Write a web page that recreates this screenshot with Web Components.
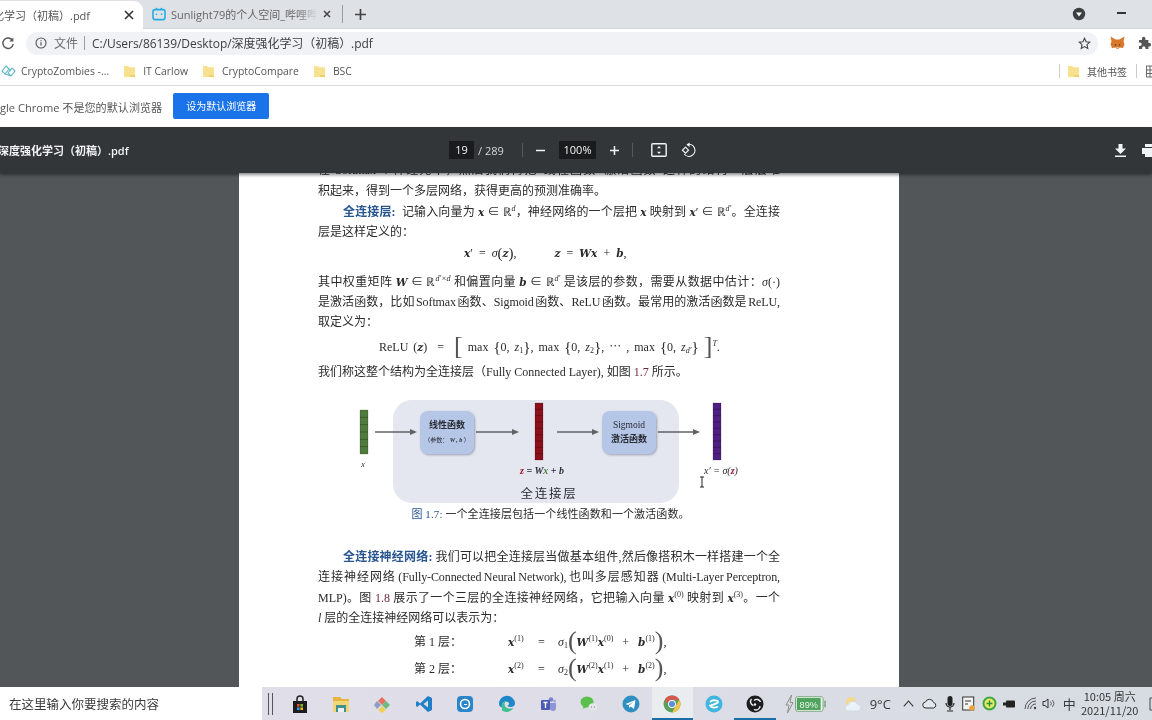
<!DOCTYPE html>
<html lang="zh">
<head>
<meta charset="utf-8">
<title>深度强化学习（初稿）.pdf</title>
<style>
  html, body { margin: 0; width: 1152px; height: 720px; overflow: hidden; background: #525659; }
  body { display: flex; flex-direction: column; font-family: "Open Sans", "Noto Sans CJK SC", sans-serif; filter: blur(.35px); }
</style>
</head>
<body>
<tab-strip></tab-strip>
<address-bar></address-bar>
<bookmark-bar></bookmark-bar>
<default-infobar></default-infobar>
<pdf-toolbar></pdf-toolbar>
<pdf-viewer></pdf-viewer>
<win-taskbar></win-taskbar>

<script>
const UI_FONT = '"Open Sans", "Noto Sans CJK SC", sans-serif'
const FOLDER = `<svg width="13" height="14" viewBox="0 0 13 14"><path d="M1 2h4l1 1.2h6V13H1z" fill="#f7e08e"/><path d="M7 11h5v2H7z" fill="#f0cf6d"/></svg>`

class TabStrip extends HTMLElement {
	constructor() {
		super()
		this.attachShadow({ mode: 'open' })
	}

	connectedCallback() {
		this.shadowRoot.innerHTML = /* html */ `
      <style>
        :host { display: flex; align-items: flex-end; height: 29px; background: #dee1e6; box-sizing: border-box; border-bottom: 1px solid #d2d4d8; font: 11px ${UI_FONT}; color: #555; }
        .active { display: flex; align-items: center; width: 143px; height: 28px; background: #fff; border-radius: 0 9px 0 0; overflow: hidden; box-sizing: border-box; padding-bottom: 1px; margin-bottom: -1px; flex: none; }
        .active span { margin-left: -18px; width: 141px; flex: none; white-space: nowrap; }
        .x { flex: none; width: 12px; height: 12px; }
        .tab { display: flex; align-items: center; height: 28px; width: 199px; box-sizing: border-box; padding-left: 9px; position: relative; }
        .tab .name { margin-left: 5px; width: 147px; white-space: nowrap; overflow: hidden; color: #666;
          -webkit-mask-image: linear-gradient(90deg, #000 85%, transparent); mask-image: linear-gradient(90deg, #000 85%, transparent); }
        .tab .x { margin-left: 3px; }
        .sep { width: 1px; height: 18px; background: #9a9da1; margin: 0 0 5px 0; }
        .plus { margin: 0 0 7px 11px; width: 13px; height: 13px; }
        .grow { flex: 1; }
        .badge { margin: 0 0 7px 0; width: 14px; height: 14px; }
        .min { margin: 0 26px 14px 31px; width: 9px; height: 2px; background: #333; }
      </style>
      <div class="active">
        <span>强化学习（初稿）.pdf</span>
        <svg class="x" viewBox="0 0 12 12"><path d="M2 2l8 8M10 2l-8 8" stroke="#333" stroke-width="1.6"/></svg>
      </div>
      <div class="tab">
        <svg width="14" height="14" viewBox="0 0 14 14"><path d="M4 .8l2 2M10 .8l-2 2" stroke="#23ade5" stroke-width="1.2"/><rect x="1" y="2.6" width="12" height="10" rx="2" fill="none" stroke="#23ade5" stroke-width="1.6"/><path d="M4.5 6.5v1.5M9.5 6.5v1.5" stroke="#23ade5" stroke-width="1.4"/></svg>
        <span class="name">Sunlight79的个人空间_哔哩哔哩</span>
        <svg class="x" viewBox="0 0 12 12"><path d="M3 3l6 6M9 3l-6 6" stroke="#444" stroke-width="1.5"/></svg>
      </div>
      <div class="sep"></div>
      <svg class="plus" viewBox="0 0 13 13"><path d="M6.5 1v11M1 6.5h11" stroke="#444" stroke-width="1.7"/></svg>
      <div class="grow"></div>
      <svg class="badge" viewBox="0 0 14 14"><circle cx="7" cy="7" r="6.2" fill="#3c4043"/><path d="M4 5.6h6L7 9.4z" fill="#fff"/></svg>
      <div class="min"></div>
    `
	}
}
customElements.define('tab-strip', TabStrip)

class AddressBar extends HTMLElement {
	constructor() {
		super()
		this.attachShadow({ mode: 'open' })
	}

	connectedCallback() {
		this.shadowRoot.innerHTML = /* html */ `
      <style>
        :host { display: flex; align-items: center; height: 28px; background: #fff; font: 12px ${UI_FONT}; color: #3c4043; }
        .reload { flex: none; width: 14px; height: 14px; margin: 0 11px 0 1px; }
        .pill { flex: none; width: 1072px; height: 23px; background: #f0f2f6; border-radius: 12px; display: flex; align-items: center; box-sizing: border-box; padding-left: 9px; }
        .info { flex: none; width: 12px; height: 12px; }
        .kind { margin-left: 7px; color: #6a6d71; }
        .bar { width: 1px; height: 14px; background: #9a9da1; margin: 0 7px 0 6px; }
        .url { flex: 1; white-space: nowrap; letter-spacing: -.05px; }
        .star { flex: none; margin-right: 7px; }
        .fox { flex: none; margin: 0 0 1px 12px; }
        .puzzle { flex: none; margin: 0 0 1px 13px; }
      </style>
      <svg class="reload" viewBox="0 0 14 14"><path d="M11.5 4.5A5.2 5.2 0 1 0 12.2 8" fill="none" stroke="#555" stroke-width="1.4"/><path d="M12.4 1.6v4h-4z" fill="#555"/></svg>
      <div class="pill">
        <svg class="info" viewBox="0 0 12 12"><circle cx="6" cy="6" r="5" fill="none" stroke="#555" stroke-width="1.1"/><path d="M6 5.2v3.4M6 3.2v1" stroke="#555" stroke-width="1.2"/></svg>
        <span class="kind">文件</span><span class="bar"></span>
        <span class="url">C:/Users/86139/Desktop/深度强化学习（初稿）.pdf</span>
        <svg class="star" width="13" height="13" viewBox="0 0 14 14"><path d="M7 1.4l1.7 3.7 4 .5-3 2.7.8 4L7 10.3l-3.5 2 .8-4-3-2.7 4-.5z" fill="none" stroke="#444" stroke-width="1.2"/></svg>
      </div>
      <svg class="fox" width="15" height="14" viewBox="0 0 15 14"><path d="M.5.5l5.2 3h3.6l5.2-3-1 5 1 3-1.6 3.6-3.2-.6-1.5 1.4H6.800l-1.500-1.400-3.200.6L.5 8.500l1-3z" fill="#d9772a"/><path d="M5 8l1.500 1-1.800.8zM10 8l-1.500 1 1.800.8z" fill="#33302c"/><path d="M6.500 11h2l-.3 1.500H6.800z" fill="#e9d7c4"/></svg>
      <svg class="puzzle" width="13" height="14" viewBox="0 0 13 14"><path d="M1 4h3V2.500a1.700 1.700 0 0 1 3.400 0V4h3v3h1a1.700 1.700 0 0 1 0 3.400h-1V13H7.500v-1a1.700 1.700 0 0 0-3.400 0v1H1v-3h1a1.700 1.700 0 0 0 0-3.400H1z" fill="#555"/></svg>
    `
	}
}
customElements.define('address-bar', AddressBar)

class BookmarkBar extends HTMLElement {
	constructor() {
		super()
		this.attachShadow({ mode: 'open' })
	}

	connectedCallback() {
		this.shadowRoot.innerHTML = /* html */ `
      <style>
        :host { display: flex; align-items: center; height: 29px; box-sizing: border-box; border-bottom: 1px solid #dadce0; background: #fff; font: 10.4px ${UI_FONT}; color: #555; white-space: nowrap; overflow: hidden; }
        .zombie { margin: 0 5px 0 1px; flex: none; }
        .mark { display: flex; align-items: center; gap: 7px; flex: none; }
        .grow { flex: 1; }
        .div { width: 1px; height: 14px; background: #ccc; flex: none; }
        .grid { margin: 0 -6px 0 9px; flex: none; }
        .other { font-size: 10px; }
      </style>
      <svg class="zombie" width="15" height="14" viewBox="0 0 15 14"><path d="M1 7l4-5 3 3-4 5zM7 9l4-5 3 3-4 5zM5 2l5 5M4 10l6 2" fill="none" stroke="#5cb6c2" stroke-width="1.100"/></svg>
      <span>CryptoZombies -...</span>
      <span class="mark" style="margin-left:14px">${FOLDER}<span>IT Carlow</span></span>
      <span class="mark" style="margin-left:14px">${FOLDER}<span>CryptoCompare</span></span>
      <span class="mark" style="margin-left:14px">${FOLDER}<span>BSC</span></span>
      <span class="grow"></span>
      <span class="div"></span>
      <span class="mark" style="margin:0 9px 0 7px">${FOLDER}<span class="other">其他书签</span></span>
      <span class="div"></span>
      <svg class="grid" width="12" height="13" viewBox="0 0 12 13"><path d="M.5 1h11v11H.5zM.5 5h11M.5 8.500h11M4 1v11" fill="none" stroke="#666"/></svg>
    `
	}
}
customElements.define('bookmark-bar', BookmarkBar)

class DefaultInfobar extends HTMLElement {
	constructor() {
		super()
		this.attachShadow({ mode: 'open' })
	}

	connectedCallback() {
		this.shadowRoot.innerHTML = /* html */ `
      <style>
        :host { display: flex; align-items: center; height: 41px; background: #fff; font: 11.100px ${UI_FONT}; color: #555; white-space: nowrap; }
        button { all: unset; margin: 0 0 1px 11px; width: 96px; height: 26px; line-height: 26px; text-align: center; background: #1a73e8; border-radius: 2px; color: #fff; font-size: 10px; }
      </style>
      <span>gle Chrome 不是您的默认浏览器</span>
      <button>设为默认浏览器</button>
    `
	}
}
customElements.define('default-infobar', DefaultInfobar)

class PdfToolbar extends HTMLElement {
	constructor() {
		super()
		this.attachShadow({ mode: 'open' })
	}

	connectedCallback() {
		this.shadowRoot.innerHTML = /* html */ `
      <style>
        :host { display: flex; align-items: center; height: 46px; flex: none; background: #323639; color: #f1f3f4; font: 11px ${UI_FONT}; position: relative; z-index: 2; box-shadow: 0 2px 3px rgba(0,0,0,.45); white-space: nowrap; }
        .title { width: 449px; flex: none; overflow: hidden; font-weight: 600; }
        .title span { display: block; margin-left: -2px; }
        .box { flex: none; height: 18px; line-height: 18px; text-align: center; background: #191b1c; }
        .page { width: 25px; }
        .of { margin-left: 4px; width: 44px; flex: none; color: #d5d7d8; }
        .div { flex: none; width: 1px; height: 14px; background: #55595c; }
        .zoom { width: 37px; }
        svg { flex: none; }
      </style>
      <div class="title"><span>深度强化学习（初稿）.pdf</span></div>
      <div class="box page">19</div>
      <div class="of">/ 289</div>
      <div class="div"></div>
      <svg style="margin:0 13px 0 12px" width="11" height="11" viewBox="0 0 11 11"><path d="M1 5.500h9" stroke="#f1f3f4" stroke-width="1.500"/></svg>
      <div class="box zoom">100%</div>
      <svg style="margin:0 12px 0 13px" width="11" height="11" viewBox="0 0 11 11"><path d="M1 5.500h9M5.500 1v9" stroke="#f1f3f4" stroke-width="1.500"/></svg>
      <div class="div"></div>
      <svg style="margin-left:18px" width="16" height="14" viewBox="0 0 16 14"><rect x=".8" y=".8" width="14.400" height="12.400" rx="1" fill="none" stroke="#f1f3f4" stroke-width="1.400"/><path d="M8 3l2 2.200H6zM8 11l2-2.200H6z" fill="#f1f3f4"/></svg>
      <svg style="margin-left:14px" width="16" height="16" viewBox="0 0 16 16"><path d="M6 2.600A6 6 0 1 1 3.200 12" fill="none" stroke="#f1f3f4" stroke-width="1.200"/><path d="M8.600.5v4.500L5.500 2.700z" fill="#f1f3f4"/><path d="M4.500 5.200L7.500 8.200 4.500 11.200 1.500 8.200z" fill="none" stroke="#f1f3f4" stroke-width="1.200"/></svg>
      <span style="flex:1"></span>
      <svg width="11" height="13" viewBox="0 0 11 13"><path d="M3.500 0h4v4.500H11L5.500 10 0 4.500h3.500zM0 11.500h11V13H0z" fill="#f1f3f4"/></svg>
      <svg style="margin:0 -4px 0 16px" width="14" height="13" viewBox="0 0 14 13"><path d="M3 0h8v3H3zM0 4h14v6h-3v3H3v-3H0z" fill="#f1f3f4"/></svg>
    `
	}
}
customElements.define('pdf-toolbar', PdfToolbar)

class PdfLine extends HTMLElement {
	constructor() {
		super()
		this.attachShadow({ mode: 'open' })
		this.shadowRoot.innerHTML = /* html */ `
      <style>
        :host { display: block; height: 20px; line-height: 20px; overflow: visible; }
        :host([full]) { text-align: justify; text-align-last: justify; }
        :host([tight]) { word-spacing: -1.500px; letter-spacing: -.1px; }
        :host([nowrap]) { white-space: nowrap; }
      </style>
      <slot></slot>
    `
	}
}
customElements.define('pdf-line', PdfLine)

class FcFigure extends HTMLElement {
	constructor() {
		super()
		this.attachShadow({ mode: 'open' })
	}

	bar(x, y, h, fill, n) {
		let cells = ''
		for (let i = 1; i < n; i++) cells += `<path d="M${x} ${y + i * h / n}h8" stroke="rgba(0,0,0,.45)" stroke-width=".6"/>`
		return `<rect x="${x}" y="${y}" width="8" height="${h}" fill="${fill}" stroke="rgba(0,0,0,.35)" stroke-width=".5"/>${cells}`
	}

	connectedCallback() {
		const arrows = [[375, 417], [476, 519], [557, 599], [658, 700]]
			.map(([a, b]) => `<path d="M${a} 432H${b - 5}" stroke="#606266" stroke-width="1.300"/><path d="M${b} 432l-7-3v6z" fill="#606266"/>`).join('')
		this.shadowRoot.innerHTML = /* html */ `
      <style>
        :host { display: block; height: 114px; margin-top: 10px; }
        svg { display: block; }
        text { font-family: "Noto Sans CJK SC", sans-serif; fill: #2a2c33; }
        .m { font-family: "Liberation Serif", serif; }
      </style>
      <svg width="462" height="114" viewBox="318 392 462 114">
        <defs><filter id="s" x="-10%" y="-10%" width="125%" height="125%"><feDropShadow dx="1" dy="1" stdDeviation="1" flood-color="#5a6478" flood-opacity=".55"/></filter></defs>
        <rect x="393" y="400" width="286" height="103" rx="19" fill="#e4e7f0"/>
        ${this.bar(360, 410, 44, '#4f7c3e', 6)}
        ${this.bar(535, 403, 57, '#8d0f1c', 9)}
        ${this.bar(713, 403, 57, '#4f1f82', 9)}
        ${arrows}
        <rect x="420" y="411" width="54" height="43" rx="8" fill="#b5c6e6" filter="url(#s)"/>
        <rect x="602" y="411" width="54" height="43" rx="8" fill="#b5c6e6" filter="url(#s)"/>
        <text x="447" y="428" font-size="9" font-weight="700" text-anchor="middle">线性函数</text>
        <text x="447" y="442" font-size="6" text-anchor="middle" fill="#555">（参数： <tspan class="m" font-style="italic" font-weight="700">W , b</tspan> ）</text>
        <text x="629" y="428" font-size="9.500" font-weight="500" text-anchor="middle" class="m">Sigmoid</text>
        <text x="629" y="442" font-size="9" font-weight="700" text-anchor="middle">激活函数</text>
        <text x="363" y="467" font-size="8" class="m" font-style="italic" text-anchor="middle" fill="#555">x</text>
        <text x="542" y="474" font-size="10" class="m" font-weight="700" font-style="italic" text-anchor="middle"><tspan fill="#a0142a">z</tspan> = W<tspan fill="#4f7c3e">x</tspan> + b</text>
        <text x="721" y="474" font-size="10" class="m" font-style="italic" text-anchor="middle">x′ = σ(<tspan fill="#a0142a" font-weight="700">z</tspan>)</text>
        <text x="549" y="498" font-size="12.500" letter-spacing="1.700" text-anchor="middle" fill="#3c4148">全连接层</text>
        <path d="M700 477h4M700 487h4M702 477v10" stroke="#222" stroke-width="1" fill="none"/>
      </svg>
    `
	}
}
customElements.define('fc-figure', FcFigure)

class PdfViewer extends HTMLElement {
	constructor() {
		super()
		this.attachShadow({ mode: 'open' })
	}

	connectedCallback() {
		const vec = s => `<b class="v">${s}</b>`
		const R = sup => `ℝ<sup>${sup}</sup>`
		const brace = s => `<span class="br">{</span>${s}<span class="br">}</span>`
		const layer = (n, a, b) => `<span class="eq" style="width:94px">第 ${n} 层：</span><span class="eq" style="width:30px">${vec('x')}<sup class="n">(${a})</sup></span><span class="eq" style="width:20px">=</span><i>σ</i><sub>${n}</sub><span class="big">(</span>${vec('W')}<sup class="n">(${a})</sup>${vec('x')}<sup class="n">(${b})</sup> &nbsp; + &nbsp; ${vec('b')}<sup class="n">(${a})</sup><span class="big">)</span>,`
		this.shadowRoot.innerHTML = /* html */ `
      <style>
        :host { display: block; flex: 1; min-height: 0; background: #525659; padding-left: 239px; overflow: hidden; }
        .page { width: 660px; height: 100%; box-sizing: border-box; background: #fff; padding: 0 119px 0 79px; overflow: hidden; font: 12px/20px "Liberation Serif", "Noto Sans CJK SC", serif; color: #2b2b2b; }
        .v { font: italic 700 10.5px "DejaVu Serif", serif; }
        i { font-family: "Liberation Serif", serif; }
        sup { font-size: 8px; line-height: 0; vertical-align: 5px; font-style: italic; }
        sup.n { font-style: normal; }
        sub { font-size: 8px; line-height: 0; vertical-align: -2px; }
        .head { color: #27558f; font-weight: 700; }
        .ref { color: #6e2a3a; }
        .cap { color: #27558f; }
        .big { font-size: 26px; line-height: 0; font-weight: 300; vertical-align: -3px; color: #555; }
        .mid { font-size: 15px; line-height: 0; vertical-align: -1px; }
        .br { font-size: 15px; line-height: 0; vertical-align: -1px; }
        .eq { display: inline-block; }
        .center { text-align: center; }
        .wide { word-spacing: 2px; }
        .fit { letter-spacing: -.1px; }
      </style>
      <div class="page">
        <pdf-line full style="margin-top:-13px">在 Softmax 个神经元中，然后我们再把“线性函数+激活函数”这样的结构一层层堆</pdf-line>
        <pdf-line style="margin-top:1px">积起来，得到一个多层网络，获得更高的预测准确率。</pdf-line>
        <pdf-line full style="margin-top:1px;padding-left:25px"><span class="head">全连接层:</span> &nbsp;记输入向量为 ${vec('x')} ∈ ${R('d')}，神经网络的一个层把 ${vec('x')} 映射到 ${vec('x')}′ ∈ ${R('d′')}。全连接</pdf-line>
        <pdf-line>层是这样定义的：</pdf-line>
        <pdf-line nowrap style="margin-top:1px;padding-left:146px">${vec('x')}′ &nbsp;= &nbsp;<i>σ</i><span class="mid">(</span>${vec('z')}<span class="mid">)</span>,<span style="display:inline-block;width:35px"></span> ${vec('z')} &nbsp;= &nbsp;${vec('W')}${vec('x')} &nbsp;+ &nbsp;${vec('b')},</pdf-line>
        <pdf-line full style="margin-top:9px">其中权重矩阵 ${vec('W')} ∈ ${R('d′×d')} 和偏置向量 ${vec('b')} ∈ ${R('d′')} 是该层的参数，需要从数据中估计：<i>σ</i>(·)</pdf-line>
        <pdf-line full tight>是激活函数，比如 Softmax 函数、Sigmoid 函数、ReLU 函数。最常用的激活函数是 ReLU,</pdf-line>
        <pdf-line>取定义为：</pdf-line>
        <pdf-line nowrap class="wide" style="margin-top:5px;padding-left:61px">ReLU (${vec('z')}) &nbsp;= &nbsp;<span class="big">[</span> max ${brace('0, <i>z</i><sub>1</sub>')}, max ${brace('0, <i>z</i><sub>2</sub>')}, ⋯ , max ${brace('0, <i>z</i><sub><i>d′</i></sub>')} <span class="big">]</span><sup>T</sup>.</pdf-line>
        <pdf-line nowrap style="margin-top:5px">我们称这整个结构为全连接层（Fully Connected Layer), 如图 <span class="ref">1.7</span> 所示。</pdf-line>
        <fc-figure></fc-figure>
        <pdf-line class="center" style="margin-top:-2px;padding-left:3px;font-size:11px;letter-spacing:.1px"><span class="cap">图 1.7:</span> 一个全连接层包括一个线性函数和一个激活函数。</pdf-line>
        <pdf-line full class="fit" style="margin-top:23px;padding-left:25px"><span class="head">全连接神经网络:</span> 我们可以把全连接层当做基本组件,然后像搭积木一样搭建一个全</pdf-line>
        <pdf-line full tight>连接神经网络 (Fully-Connected Neural Network), 也叫多层感知器 (Multi-Layer Perceptron,</pdf-line>
        <pdf-line full style="margin-top:1px">MLP)。图 <span class="ref">1.8</span> 展示了一个三层的全连接神经网络，它把输入向量 ${vec('x')}<sup class="n">(0)</sup> 映射到 ${vec('x')}<sup class="n">(3)</sup>。一个</pdf-line>
        <pdf-line><i>l</i> 层的全连接神经网络可以表示为：</pdf-line>
        <pdf-line nowrap style="margin-top:4px;padding-left:96px">${layer(1, 1, 0)}</pdf-line>
        <pdf-line nowrap style="margin-top:7px;padding-left:96px">${layer(2, 2, 1)}</pdf-line>
      </div>
    `
	}
}
customElements.define('pdf-viewer', PdfViewer)

const APP_ICONS = {
	store: `<path d="M6 6V4a3 3 0 0 1 6 0v2" fill="none" stroke="#222" stroke-width="1.500"/><path d="M2 6h14v12H2z" fill="#1d1d1d"/><path d="M6 9h2.600v2.600H6z" fill="#e8532b"/><path d="M9.400 9H12v2.600H9.400z" fill="#7fba2c"/><path d="M6 12.400h2.600V15H6z" fill="#2aa3e6"/><path d="M9.400 12.400H12V15H9.400z" fill="#f5b915"/>`,
	files: `<path d="M1 2h7l2 2h7v4H1z" fill="#e8b63e"/><path d="M1 6h16v11h-3v-4H4v4H1z" fill="#f2d675"/><path d="M4 10h10v7H4z" fill="#3f8f93"/><path d="M6 13h6v4H6z" fill="#eee"/>`,
	diamond: `<path d="M9 2l4 4-4 4-4-4z" fill="#e6705e"/><path d="M4 6l4 4-4 4-3-4z" fill="#8c9fc9"/><path d="M13 6l4 4-4 4-4-4z" fill="#6dbb7d"/><path d="M9 11l4 4-4 3-4-3z" fill="#f2cf5a"/>`,
	vscode: `<path d="M13 1l4 2v12l-4 2-8-7.500L2 12 1 11V7l1-1 3 2.500zM13 5.500L8.500 9l4.500 3.500z" fill="#1f7fc9"/>`,
	quick: `<rect x="1" y="1" width="16" height="16" rx="4" fill="#2a86c8"/><circle cx="9" cy="9" r="4.500" fill="none" stroke="#fff" stroke-width="1.600"/><path d="M8 9.500h3" stroke="#fff"/>`,
	edge: `<path d="M1 9a8 8 0 0 1 16-.5c0 2.500-2.500 3.500-4.500 3.500-2 0-3-.8-3-1.500 3-1 1.500-4-1.500-4C5 6.500 3 9 4 12.500 2 12 1 10.500 1 9z" fill="#1d87c9"/><path d="M4 12.500C3 8 6 5.500 8.500 6c-4 2-2 9.500 7 7A8 8 0 0 1 4 15.500z" fill="#3fc08f"/>`,
	teams: `<circle cx="12" cy="4.500" r="2.300" fill="#7b83c9"/><circle cx="15.500" cy="6" r="1.500" fill="#a5abe0"/><path d="M9 8h8v5a3 3 0 0 1-6 0z" fill="#8e95d6"/><rect x="2" y="5" width="9" height="10" rx="1" fill="#4e5bb5"/><path d="M4.500 7.500h4M6.500 7.500v5.500" stroke="#fff" stroke-width="1.300"/>`,
	wechat: `<ellipse cx="7" cy="7" rx="6.500" ry="5.500" fill="#58c04b"/><path d="M3.500 11l-.5 3 3.500-2z" fill="#58c04b"/><ellipse cx="13" cy="12" rx="4.500" ry="3.800" fill="#e4e7ea"/><circle cx="11.500" cy="12" r=".7" fill="#999"/><circle cx="14.500" cy="12" r=".7" fill="#999"/>`,
	telegram: `<circle cx="9" cy="9" r="8.500" fill="#2f8fc2"/><path d="M3.500 9l10-4-1.500 9-3.200-2.400-1.600 1.500-.3-2.600L12 6.500 6 10z" fill="#fff"/>`,
	chrome: `<circle cx="9" cy="9" r="8.500" fill="#59a05a"/><path d="M9 .5a8.500 8.500 0 0 1 7.400 4.300L9 5.500 3 8 2.200 3.900A8.500 8.500 0 0 1 9 .5z" fill="#d65b4f"/><path d="M16.400 4.800a8.500 8.500 0 0 1-7.200 12.700L12.500 11z" fill="#efc44f"/><circle cx="9" cy="9" r="3.900" fill="#fff"/><circle cx="9" cy="9" r="3" fill="#5b8dd8"/>`,
	blue: `<circle cx="9" cy="9" r="8.500" fill="#3fb5e0"/><path d="M5 7c3-3 8-1.500 8 0-1 2-5 2.500-8 3.500 2 3 6 2 8 1" fill="none" stroke="#fff" stroke-width="1.800"/>`,
	obs: `<circle cx="9" cy="9" r="8.500" fill="#1c1c1e"/><path d="M5.500 4a4 4 0 0 0 2 6.500M14.500 7a4 4 0 0 0-6.500-1.500M8 14.500a4 4 0 0 0 6-3.500" fill="none" stroke="#eee" stroke-width="1.400"/><circle cx="9" cy="9.500" r="1.200" fill="#eee"/>`
}

class TaskbarApp extends HTMLElement {
	constructor() {
		super()
		this.attachShadow({ mode: 'open' })
	}

	connectedCallback() {
		this.shadowRoot.innerHTML = /* html */ `
      <style>
        :host { display: flex; align-items: center; justify-content: center; flex: none; width: 41.400px; height: 33px; box-sizing: border-box; }
        :host([open]) { border-bottom: 2px solid #1b6fa8; padding-top: 2px; }
        :host([active]) { background: #eaedf0; }
      </style>
      <svg width="18" height="18" viewBox="0 0 18 18">${APP_ICONS[this.getAttribute('icon')]}</svg>
    `
	}
}
customElements.define('taskbar-app', TaskbarApp)

class WinTaskbar extends HTMLElement {
	constructor() {
		super()
		this.attachShadow({ mode: 'open' })
	}

	connectedCallback() {
		const apps = ['store', 'files', 'diamond', 'vscode', 'quick', 'edge', 'teams', 'wechat', 'telegram', 'chrome', 'blue', 'obs']
			.map(n => `<taskbar-app icon="${n}"${n === 'chrome' ? ' open active' : ''}${n === 'obs' ? ' open' : ''}></taskbar-app>`).join('')
		this.shadowRoot.innerHTML = /* html */ `
      <style>
        :host { display: flex; align-items: center; flex: none; height: 33px; background: linear-gradient(90deg, #e2dfea, #dedde8 45%, #d6dce1); font: 12.500px "Noto Sans CJK SC", sans-serif; color: #3a3a3a; position: relative; z-index: 2; white-space: nowrap; overflow: hidden; }
        .search { flex: none; width: 262px; height: 33px; line-height: 33px; background: #fff; box-sizing: border-box; padding-left: 9px; }
        .grip { flex: none; width: 3px; height: 22px; border: solid #555; border-width: 0 1px; margin: 0 6px 0 6px; }
        .tray { flex: none; display: flex; align-items: center; }
        svg { flex: none; }
        .clock { flex: none; width: 62px; display: grid; gap: 0; font-size: 11px; text-align: center; color: #333; }
        .clock div { height: 13.500px; line-height: 13.500px; }
      </style>
      <div class="search">在这里输入你要搜索的内容</div>
      <div class="grip"></div>
      ${apps}
      <div class="tray">
        <svg style="margin-left:9px" width="9" height="20" viewBox="0 0 9 20"><path d="M6.500 1L1 11h3L2.500 19 8 8.500H5z" fill="none" stroke="#888" stroke-width=".9"/></svg>
        <svg style="margin-left:1px" width="33" height="16" viewBox="0 0 36 17"><rect x=".6" y=".6" width="30" height="15.800" rx="2" fill="#f3f5f3" stroke="#6da06c"/><rect x="2" y="2" width="26" height="13" fill="#4fa35c"/><text x="15" y="12.500" font-size="10" text-anchor="middle" fill="#e9f5e9" font-family="Liberation Sans, sans-serif">89%</text><path d="M32 5h1.500v7H32z" fill="#6da06c"/></svg>
        <svg style="margin-left:15px" width="20" height="18" viewBox="0 0 20 18"><circle cx="8" cy="7" r="5" fill="#f5d98a"/><path d="M5 16a3 3 0 0 1 0-6 5 5 0 0 1 9.500-.5A3.300 3.300 0 0 1 15 16z" fill="#eaf1f8" stroke="#c9d4de" stroke-width=".6"/></svg>
        <span style="margin-left:7px;font-size:13px;font-family:'Open Sans',sans-serif;width:33px">9°C</span>
        <svg width="11" height="7" viewBox="0 0 11 7"><path d="M.8 6.300L5.500 1l4.700 5.300" fill="none" stroke="#333" stroke-width="1.100"/></svg>
        <svg style="margin-left:8px" width="15" height="11" viewBox="0 0 15 11"><path d="M4 10a3 3 0 0 1-.5-6 4.200 4.200 0 0 1 8 .5A2.800 2.800 0 0 1 11.500 10z" fill="#e4e7ec" stroke="#333" stroke-width="1"/></svg>
        <svg style="margin-left:8px" width="10" height="16" viewBox="0 0 10 16"><rect x="2.500" y="0" width="5" height="10" rx="2.500" fill="#222"/><path d="M1 7a4 4 0 0 0 8 0M5 11v3M2 15h6" fill="none" stroke="#222" stroke-width="1.200"/></svg>
        <svg style="margin-left:7px" width="13" height="15" viewBox="0 0 13 15"><rect x=".7" y="1" width="11" height="13" fill="#f4f4f4" stroke="#333"/><path d="M3 5h6M3 8h3" stroke="#333"/><circle cx="10" cy="12" r="2.800" fill="#e8a33f"/></svg>
        <svg style="margin-left:7px" width="15" height="15" viewBox="0 0 15 15"><circle cx="7.500" cy="7.500" r="6" fill="#e8e96a" stroke="#3fa742" stroke-width="2"/><path d="M7.500 4.500v6M4.500 7.500h6" stroke="#2f8f3a" stroke-width="1.500"/></svg>
        <svg style="margin-left:6px" width="13" height="10" viewBox="0 0 13 10"><rect x="3" y="1.500" width="9" height="7" rx="1" fill="#222"/><rect x="0" y="3.500" width="3" height="3" fill="#222"/></svg>
        <svg style="margin-left:8px" width="13" height="13" viewBox="0 0 13 13"><path d="M1 12a11 11 0 0 1 11-11M3.800 12a8 8 0 0 1 8.200-8M6.600 12A5 5 0 0 1 12 7" fill="none" stroke="#444" stroke-width=".9"/><circle cx="11" cy="11" r="1.200" fill="#444"/></svg>
        <svg style="margin-left:5px" width="13" height="13" viewBox="0 0 13 13"><path d="M1 4.500h2L6 2v9L3 8.500H1z" fill="none" stroke="#333" stroke-width="1"/><path d="M8.500 4.500a3 3 0 0 1 0 4M10.500 3a5.500 5.500 0 0 1 0 7" fill="none" stroke="#555" stroke-width=".9"/></svg>
        <span style="margin-left:8px;font-size:13px;width:13px">中</span>
        <div class="clock" style="margin-left:3px"><div>10:05 周六</div><div>2021/11/20</div></div>
        <svg style="margin-left:8px" width="8" height="16" viewBox="0 0 8 16"><path d="M1 2h7M1 14h7M1 2v12" fill="none" stroke="#444"/></svg>
      </div>
    `
	}
}
customElements.define('win-taskbar', WinTaskbar)
</script>
</body>
</html>
